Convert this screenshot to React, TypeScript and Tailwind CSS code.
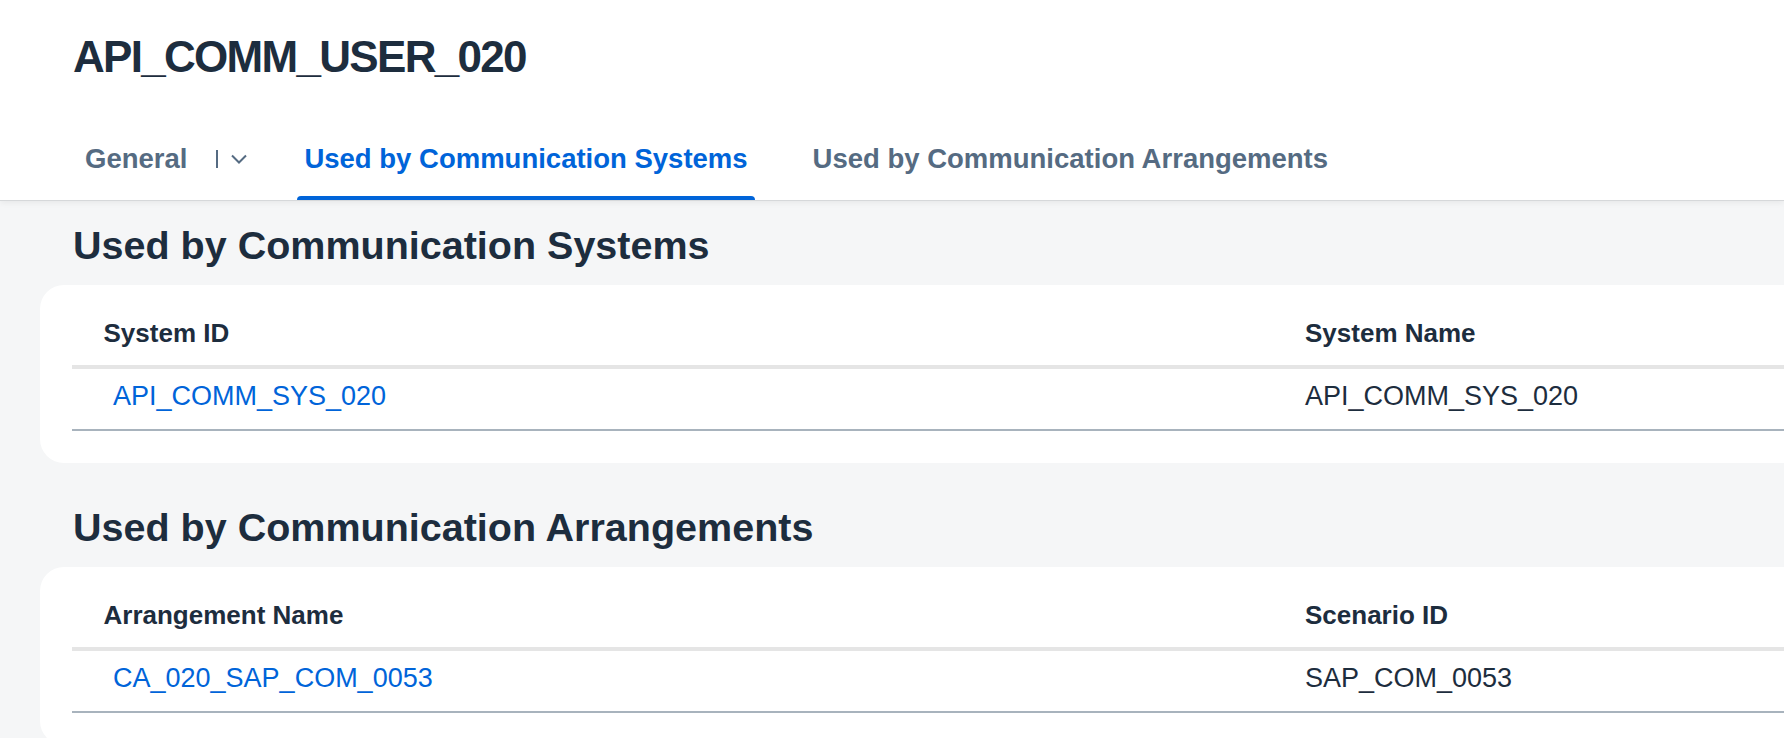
import React from "react";

const font = { fontFamily: '"Liberation Sans", Arial, sans-serif' };

function Chevron() {
  return (
    <svg width="16" height="10" viewBox="0 0 16 10" fill="none">
      <path d="M1 1.5l7 7 7-7" stroke="#556b82" strokeWidth="2" />
    </svg>
  );
}

function Tab({
  label,
  active = false,
  className = "",
  children,
}: {
  label: string;
  active?: boolean;
  className?: string;
  children?: React.ReactNode;
}) {
  return (
    <div className={"flex flex-col " + className}>
      <div className="flex items-center px-[7px]">
        <span
          className={
            "text-[27.5px] leading-[34px] font-bold whitespace-nowrap " +
            (active ? "text-[#0064d9]" : "text-[#556b82]")
          }
        >
          {label}
        </span>
        {children}
      </div>
      <div
        className={
          "mt-[20px] h-[4px] rounded-t-[4px] " +
          (active ? "bg-[#0064d9]" : "bg-transparent")
        }
      />
    </div>
  );
}

function Section({
  title,
  cols,
  row,
  className = "",
}: {
  title: string;
  cols: [string, string];
  row: [string, string];
  className?: string;
}) {
  return (
    <section className={className}>
      <h2 className="ml-[33px] text-[39.5px] leading-[48px] font-bold text-[#1d2d3e] whitespace-nowrap">
        {title}
      </h2>
      <div className="mt-[16px] bg-white rounded-l-[24px] pl-[32px] pb-[32px]">
        <div className="grid grid-cols-[1201px_1fr] pt-[32px] pb-[16px] border-b-4 border-[#e5e5e5]">
          <div className="pl-[31.5px] text-[26px] leading-[32px] font-bold text-[#1d2d3e]">
            {cols[0]}
          </div>
          <div className="pl-[32px] text-[26px] leading-[32px] font-bold text-[#1d2d3e]">
            {cols[1]}
          </div>
        </div>
        <div className="grid grid-cols-[1201px_1fr] pt-[11px] pb-[17px] border-b-2 border-[#a8b3bd]">
          <div className="pl-[41px]">
            <a className="text-[27px] leading-[32px] text-[#0064d9] cursor-pointer">
              {row[0]}
            </a>
          </div>
          <div className="pl-[32px] text-[27px] leading-[32px] text-[#1d2d3e]">
            {row[1]}
          </div>
        </div>
      </div>
    </section>
  );
}

export default function App() {
  return (
    <div className="min-h-screen bg-[#f5f6f7] overflow-hidden" style={font}>
      <header className="relative z-10 bg-white shadow-[0_1px_0_#d6d8da,0_3px_6px_rgba(0,0,0,0.06)]">
        <div className="pt-[31px] pl-[73px]">
          <h1 className="text-[44px] leading-[52px] font-bold tracking-[-1.7px] text-[#1d2d3e]">
            API_COMM_USER_020
          </h1>
        </div>
        <nav className="mt-[59px] pl-[78px] flex items-end">
          <Tab label="General">
            <span className="ml-[29px] w-[2px] h-[18px] bg-[#556b82]" />
            <span className="ml-[13px] flex items-center">
              <Chevron />
            </span>
          </Tab>
          <Tab label="Used by Communication Systems" active className="ml-[43px]" />
          <Tab label="Used by Communication Arrangements" className="ml-[51px]" />
        </nav>
      </header>

      <main className="pt-[21px] pl-[40px]">
        <Section
          title="Used by Communication Systems"
          cols={["System ID", "System Name"]}
          row={["API_COMM_SYS_020", "API_COMM_SYS_020"]}
        />
        <Section
          className="mt-[40px]"
          title="Used by Communication Arrangements"
          cols={["Arrangement Name", "Scenario ID"]}
          row={["CA_020_SAP_COM_0053", "SAP_COM_0053"]}
        />
      </main>
    </div>
  );
}
